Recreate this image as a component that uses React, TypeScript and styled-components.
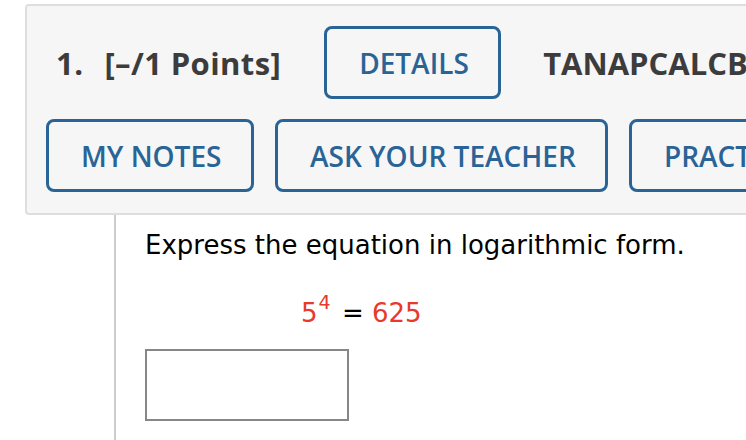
import styled, { createGlobalStyle } from 'styled-components';

const GlobalStyle = createGlobalStyle`
  html, body {
    margin: 0;
    padding: 0;
    background: #ffffff;
    overflow: hidden;
  }
  body {
    font-family: 'Open Sans', 'Liberation Sans', sans-serif;
  }
`;

const Page = styled.div`
  width: 746px;
  height: 440px;
  overflow: hidden;
`;

const Header = styled.div`
  margin: 4px 0 0 25px;
  width: 860px;
  background: #f6f6f6;
  border: 2px solid #dedede;
  border-radius: 4px;
  padding: 20px 0 21px 19px;
  display: flex;
  flex-direction: column;
  gap: 20px;
`;

const Row = styled.div<{ $indent?: number; $gap?: number }>`
  display: flex;
  align-items: center;
  gap: ${(p) => p.$gap ?? 0}px;
  padding-left: ${(p) => p.$indent ?? 0}px;
  white-space: nowrap;
`;

const Title = styled.span`
  font-size: 31px;
  font-weight: 700;
  color: #3c3c3c;
  margin-right: 43px;
  letter-spacing: 0.4px;
`;

const Number = styled.span`
  margin-right: 21px;
`;

const Code = styled.span`
  font-size: 31px;
  font-weight: 700;
  color: #3c3c3c;
  margin-left: 42px;
`;

const OutlineButton = styled.button<{ $width?: number }>`
  box-sizing: border-box;
  width: ${(p) => (p.$width ? `${p.$width}px` : 'auto')};
  height: 73px;
  flex: none;
  background: transparent;
  border: 3px solid #2a6496;
  border-radius: 8px;
  color: #2a6496;
  font-family: 'Open Sans', 'Liberation Sans', sans-serif;
  font-size: 28px;
  font-weight: 600;
  padding: 0 32px;
  text-align: center;
`;

const Body = styled.div`
  margin-left: 114px;
  border-left: 2px solid #cccccc;
  padding: 13px 0 20px 29px;
  height: 260px;
  font-family: 'DejaVu Sans', Verdana, sans-serif;
  color: #000;
`;

const Prompt = styled.p`
  margin: 0;
  font-size: 26px;
  line-height: 34px;
`;

const Equation = styled.p`
  margin: 36px 0 0 156px;
  font-size: 26px;
  line-height: 30px;
  color: #000;
`;

const Red = styled.span`
  color: #e8392b;
`;

const Sup = styled.sup`
  font-size: 19px;
  vertical-align: 13px;
  line-height: 0;
  margin-left: 1px;
  margin-right: 3px;
`;

const AnswerBox = styled.input`
  display: block;
  box-sizing: border-box;
  margin-top: 21px;
  width: 204px;
  height: 72px;
  border: 2px solid #878787;
  background: #fff;
  outline: none;
  font-size: 20px;
`;

export default function App() {
  return (
    <Page>
      <GlobalStyle />
      <Header>
        <Row $indent={10}>
          <Title>
            <Number>1.</Number>[–/1 Points]
          </Title>
          <OutlineButton $width={177}>DETAILS</OutlineButton>
          <Code>TANAPCALCBR10 5.3.001.</Code>
        </Row>
        <Row $gap={21}>
          <OutlineButton $width={208}>MY NOTES</OutlineButton>
          <OutlineButton $width={333}>ASK YOUR TEACHER</OutlineButton>
          <OutlineButton>PRACTICE ANOTHER</OutlineButton>
        </Row>
      </Header>
      <Body>
        <Prompt>Express the equation in logarithmic form.</Prompt>
        <Equation>
          <Red>
            5<Sup>4</Sup>
          </Red>{' '}
          = <Red>625</Red>
        </Equation>
        <AnswerBox type="text" aria-label="answer" />
      </Body>
    </Page>
  );
}
